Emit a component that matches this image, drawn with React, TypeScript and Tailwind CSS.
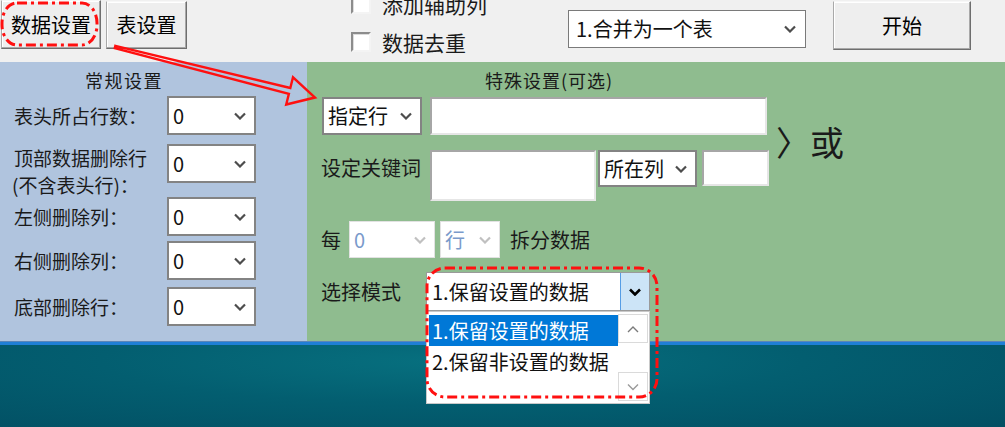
import type { ReactNode } from "react";

function Chevron({
	color = "#4d4d4d",
	up = false,
	weight = 2.2,
}: {
	color?: string;
	up?: boolean;
	weight?: number;
}) {
	return (
		<svg width="12" height="8" viewBox="0 0 12 8" className="shrink-0">
			<polyline
				points={up ? "1,7 6,2 11,7" : "1,1.5 6,6.5 11,1.5"}
				fill="none"
				stroke={color}
				strokeWidth={weight}
			/>
		</svg>
	);
}

function WinButton({
	className,
	children,
}: {
	className: string;
	children: ReactNode;
}) {
	return (
		<div
			className={`flex shrink-0 items-center justify-center border border-t-[#f7f7f7] border-l-[#a9a9a9] border-r-[#6e6e6e] border-b-[#6e6e6e] bg-[#eeeeee] text-[20px] leading-none text-black shadow-[inset_-1px_-1px_0_#a8a8a8,inset_1px_1px_0_#ffffff] ${className}`}
		>
			{children}
		</div>
	);
}

function Combo({
	value,
	className,
	textClass = "text-[#111]",
	chevronColor = "#4d4d4d",
}: {
	value: string;
	className: string;
	textClass?: string;
	chevronColor?: string;
}) {
	return (
		<div
			className={`flex shrink-0 items-center justify-between bg-white pl-[4px] pr-[8px] ${className}`}
		>
			<span className={`text-[20px] leading-none ${textClass}`}>{value}</span>
			<Chevron color={chevronColor} />
		</div>
	);
}

function TextBox({ className }: { className: string }) {
	return (
		<div
			className={`shrink-0 border-2 border-t-[#a6a6a6] border-l-[#a6a6a6] border-r-[#e6e6e6] border-b-[#e6e6e6] bg-white ${className}`}
		/>
	);
}

function CheckBox({ label }: { label: string }) {
	return (
		<div className="flex h-[28px] items-center gap-[11px]">
			<span className="h-[20px] w-[20px] shrink-0 border-2 border-t-[#8c8c8c] border-l-[#8c8c8c] border-r-[#f4f4f4] border-b-[#f4f4f4] bg-white shadow-[inset_1px_1px_0_#dcdcdc]" />
			<span className="text-[21px] leading-none text-[#1a1a1a]">{label}</span>
		</div>
	);
}

function LeftRow({
	label,
	second,
	className,
}: {
	label: string;
	second?: string;
	className: string;
}) {
	return (
		<div className={`flex h-[39px] items-center pl-[14px] ${className}`}>
			{second ? (
				<div className="w-[153px] self-start text-[19px] leading-[27px] text-[#1a1a1a]">
					<div>{label}</div>
					<div className="-ml-[2px]">{second}</div>
				</div>
			) : (
				<div className="w-[153px] text-[19px] leading-none text-[#1a1a1a]">
					{label}
				</div>
			)}
			<Combo value="0" className="h-[39px] w-[89px] border-2 border-[#838383]" />
		</div>
	);
}

function Annotations() {
	return (
		<svg
			className="pointer-events-none absolute inset-0 z-20"
			width="1005"
			height="427"
			viewBox="0 0 1005 427"
		>
			<rect
				x="2"
				y="3"
				width="95"
				height="42"
				rx="15"
				ry="20"
				fill="none"
				stroke="#ff1010"
				strokeWidth="3"
				strokeDasharray="10 4 3 4"
			/>
			<rect
				x="427"
				y="268"
				width="230"
				height="129"
				rx="18"
				ry="18"
				fill="none"
				stroke="#ff1010"
				strokeWidth="3"
				strokeDasharray="10 4 3 4"
			/>
			<polygon
				points="115.4,45.8 290.3,88 293,77.3 315,97.5 286.2,104.5 288.9,93.8 114.8,48.2"
				fill="none"
				stroke="#ff1010"
				strokeWidth="2.4"
				strokeLinejoin="miter"
			/>
		</svg>
	);
}

export default function App() {
	return (
		<div className="relative flex h-[427px] w-[1005px] flex-col overflow-hidden font-['Noto_Sans_CJK_SC','Noto_Sans',sans-serif] text-black">
			{/* top toolbar */}
			<div className="flex h-[62px] shrink-0 items-start bg-[#f0f0f0]">
				<WinButton className="ml-[1px] h-[49px] w-[100px]">数据设置</WinButton>
				<WinButton className="ml-[5px] mt-[1px] h-[48px] w-[81px]">表设置</WinButton>

				<div className="-mt-[10px] ml-[164px] flex w-[141px] flex-col gap-[10px]">
					<CheckBox label="添加辅助列" />
					<CheckBox label="数据去重" />
				</div>

				<Combo
					value="1.合并为一个表"
					className="ml-[76px] mt-[10px] h-[38px] w-[238px] border border-[#7a7a7a] pl-[7px] pr-[9px]"
				/>
				<WinButton className="ml-[27px] mt-[1px] h-[49px] w-[138px]">开始</WinButton>
			</div>

			{/* settings panels */}
			<div className="flex h-[279px] shrink-0">
				<div className="flex w-[307px] shrink-0 flex-col bg-[#b0c4de]">
					<div className="pl-[85px] pt-[8px] text-[18px] leading-[20px] tracking-[1.5px] text-[#1a1a1a]">
						常规设置
					</div>
					<LeftRow label="表头所占行数：" className="mt-[6px]" />
					<LeftRow label="顶部数据删除行" second="(不含表头行)：" className="mt-[9px]" />
					<LeftRow label="左侧删除列：" className="mt-[14px]" />
					<LeftRow label="右侧删除列：" className="mt-[5px]" />
					<LeftRow label="底部删除行：" className="mt-[7px]" />
				</div>

				<div className="flex flex-1 flex-col bg-[#8fbc8f] text-[#1a1a1a]">
					<div className="pl-[178px] pt-[8px] text-[18px] leading-[20px] tracking-[1px]">
						特殊设置(可选)
					</div>

					<div className="mt-[7px] flex items-start">
						<div className="flex w-[462px] shrink-0 flex-col">
							<div className="flex items-center">
								<Combo
									value="指定行"
									className="ml-[15px] h-[38px] w-[100px] border-2 border-[#838383] pr-[6px]"
								/>
								<TextBox className="ml-[8px] h-[38px] w-[337px]" />
							</div>
							<div className="mt-[15px] flex items-start">
								<div className="mt-[6px] w-[123px] shrink-0 pl-[14px] text-[20px] leading-[24px]">
									设定关键词
								</div>
								<TextBox className="h-[51px] w-[166px]" />
								<Combo
									value="所在列"
									className="ml-[2px] h-[37px] w-[99px] border-2 border-[#838383] pr-[6px]"
								/>
								<TextBox className="ml-[5px] h-[36px] w-[67px]" />
							</div>
						</div>
						<div className="ml-[7px] mt-[28px] text-[34px] leading-[34px] text-[#1a1a1a]">
							〉或
						</div>
					</div>

					<div className="mt-[20px] flex items-center pl-[14px]">
						<span className="w-[28px] text-[20px] leading-none">每</span>
						<Combo
							value="0"
							className="h-[37px] w-[86px] border border-[#e2e2e2]"
							textClass="text-[#7a9acb]"
							chevronColor="#c0c0c0"
						/>
						<Combo
							value="行"
							className="ml-[5px] h-[37px] w-[60px] border border-[#e2e2e2] pr-[6px]"
							textClass="text-[#7a9acb]"
							chevronColor="#c0c0c0"
						/>
						<span className="ml-[10px] text-[20px] leading-none">拆分数据</span>
					</div>

					<div className="mt-[14px] flex items-center pl-[14px]">
						<span className="w-[105px] text-[20px] leading-none">选择模式</span>
						<div className="relative z-10 h-[39px] w-[224px] shrink-0">
							<div className="flex h-full items-center border border-[#9a9a9a] bg-white">
								<span className="flex-1 pl-[5px] text-[20px] leading-none text-[#111]">
									1.保留设置的数据
								</span>
								<div className="flex h-full w-[29px] items-center justify-center border-l border-[#569de5] bg-[#cce4f7]">
									<Chevron color="#000" weight={2.6} />
								</div>
							</div>

							{/* open dropdown list */}
							<div className="absolute left-0 top-full flex h-[93px] w-[224px] border border-[#c9c9c9] bg-white">
								<div className="flex flex-1 flex-col pl-[2px] pt-[3px]">
									<div className="flex h-[31px] items-center bg-[#0078d7] pl-[3px] text-[20px] leading-none text-white">
										1.保留设置的数据
									</div>
									<div className="flex h-[31px] items-center pl-[3px] text-[20px] leading-none text-[#111]">
										2.保留非设置的数据
									</div>
								</div>
								<div className="flex w-[31px] flex-col justify-between py-[2px] pr-[1px]">
									<div className="flex h-[29px] items-center justify-center border border-[#dadada] bg-white">
										<Chevron up color="#7a7a7a" weight={1.4} />
									</div>
									<div className="flex h-[29px] items-center justify-center border border-[#dadada] bg-white">
										<Chevron color="#9a9a9a" weight={1.4} />
									</div>
								</div>
							</div>
						</div>
					</div>
				</div>
			</div>

			{/* window edge + desktop */}
			<div className="h-[1px] shrink-0 bg-[#5b86b8]" />
			<div className="h-[3px] shrink-0 bg-[#1f7fd6]" />
			<div className="flex-1 bg-[radial-gradient(ellipse_at_45%_20%,#07707f_0%,#035e70_45%,#024f63_100%)]" />

			<Annotations />
		</div>
	);
}
